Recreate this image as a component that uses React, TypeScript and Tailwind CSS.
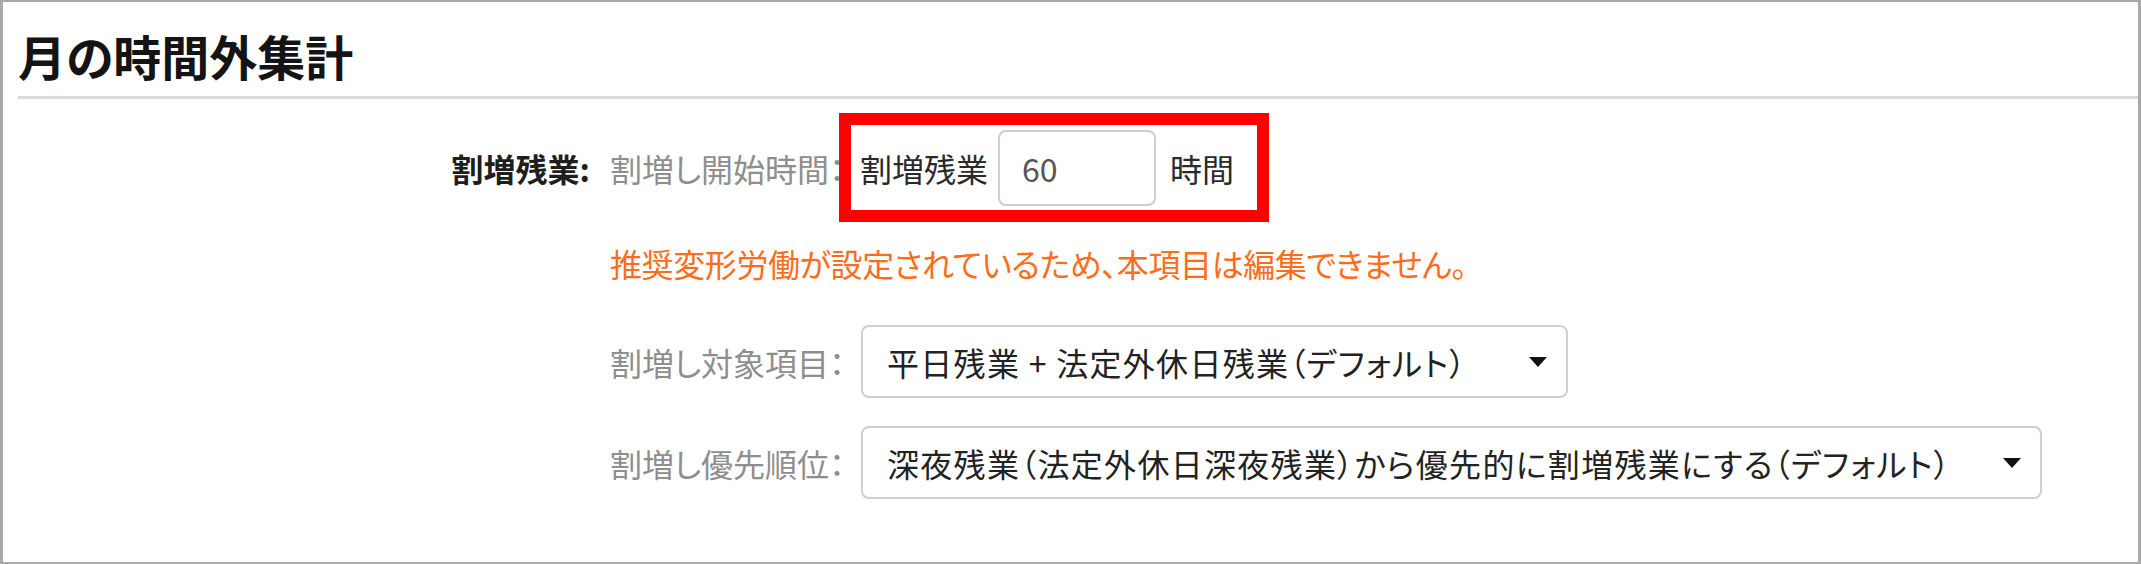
import React from "react";

const Arrow: React.FC = () => (
  <svg width="18" height="10" viewBox="0 0 18 10" className="shrink-0">
    <polygon points="0,0 18,0 9,10" fill="#111" />
  </svg>
);

interface SelectProps {
  label: string;
  value: string;
  className?: string;
}

const SelectRow: React.FC<SelectProps> = ({ label, value, className }) => (
  <div className="flex items-center">
    <span className="w-[251px] shrink-0 text-[#8e8e8e] whitespace-nowrap">{label}</span>
    <div
      className={`flex h-[73px] items-center justify-between rounded-[8px] border-2 border-[#cfcfcf] bg-white pl-[24px] pr-[19px] text-[#222] ${className ?? ""}`}
    >
      <span className="whitespace-nowrap tracking-[1.3px]">{value}</span>
      <Arrow />
    </div>
  </div>
);

export default function App() {
  return (
    <div className="h-[564px] w-full border-x-[3px] border-y-2 border-[#a9a9a9] bg-white font-['Noto_Sans_CJK_JP',sans-serif] text-[32px] leading-[40px] [font-feature-settings:'palt']">
      <div className="pl-[15px] pt-[25px]">
        <h1 className="text-[48px] font-bold leading-[56px] text-[#141414]">月の時間外集計</h1>
        <div className="mt-[13px] h-[3px] bg-[#dadada]" />
      </div>

      <div className="mt-[14px] flex pl-[15px]">
        <div className="flex h-[109px] w-[572px] shrink-0 items-center justify-end font-bold text-[#1e1e1e]">
          割増残業:
        </div>

        <div className="ml-[20px] flex flex-col">
          <div className="flex h-[109px] items-center">
            {/* the red box covers the end of this label */}
            <span className="w-[229px] overflow-hidden whitespace-nowrap text-[#8e8e8e]">
              割増し開始時間：月
            </span>
            <div className="flex h-[109px] w-[430px] items-center border-[12px] border-[#ff0000] bg-white pl-[9px]">
              <span className="text-[#2a2a2a]">割増残業</span>
              <div className="ml-[10px] flex h-[76px] w-[158px] items-center rounded-[8px] border-2 border-[#cfcfcf] pl-[22px] text-[#555]">
                60
              </div>
              <span className="ml-[14px] text-[#2a2a2a]">時間</span>
            </div>
          </div>

          <p className="mt-[21px] whitespace-nowrap tracking-[-0.4px] text-[#ff6c1a]">
            推奨変形労働が設定されているため、本項目は編集できません。
          </p>

          <div className="mt-[42px] flex flex-col gap-[28px]">
            <SelectRow
              label="割増し対象項目："
              value="平日残業 + 法定外休日残業（デフォルト）"
              className="w-[707px]"
            />
            <SelectRow
              label="割増し優先順位："
              value="深夜残業（法定外休日深夜残業）から優先的に割増残業にする（デフォルト）"
              className="w-[1181px]"
            />
          </div>
        </div>
      </div>
    </div>
  );
}
